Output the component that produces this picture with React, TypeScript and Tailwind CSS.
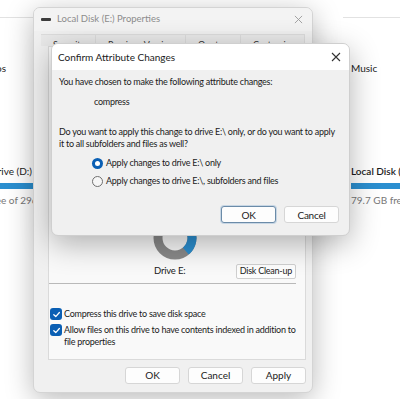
import React from 'react';

const font = { fontFamily: 'Lato, "Open Sans", sans-serif' };

function Check() {
  return (
    <span className="w-[12px] h-[12px] rounded-[3px] bg-[#0a5fb4] flex items-center justify-center shrink-0">
      <svg width="9" height="9" viewBox="0 0 10 10">
        <path d="M2 5.2 L4.2 7.3 L8.2 2.8" stroke="white" strokeWidth="1.4" fill="none" strokeLinecap="round" strokeLinejoin="round" />
      </svg>
    </span>
  );
}

function Radio({ on }: { on?: boolean }) {
  return on ? (
    <span className="w-[11px] h-[11px] rounded-full bg-[#0a5fb4] flex items-center justify-center shrink-0">
      <span className="w-[5px] h-[5px] rounded-full bg-white" />
    </span>
  ) : (
    <span className="w-[11px] h-[11px] rounded-full border border-[#6f6f6f] bg-[#f6f6f6] shrink-0" />
  );
}

function Btn({ label, focus }: { label: string; focus?: boolean }) {
  return (
    <div
      className={`w-[55px] h-[17px] rounded-[3px] bg-[#fdfdfd] flex items-center justify-center text-[10px] text-[#1b1b1b] ${
        focus ? 'border border-[#6b8ba8] shadow-[0_0_0_1px_#c7d6e4]' : 'border border-[#d6d6d6]'
      }`}
    >
      {label}
    </div>
  );
}

function Donut() {
  const r = 17;
  const c = 2 * Math.PI * r;
  return (
    <svg width="46" height="46" viewBox="0 0 46 46">
      <circle cx="23" cy="23" r={r} fill="none" stroke="#8a8a8a" strokeWidth="9" />
      <circle
        cx="23"
        cy="23"
        r={r}
        fill="none"
        stroke="#2b8fd0"
        strokeWidth="9"
        strokeDasharray={`${c * 0.36} ${c}`}
        transform="rotate(-80 23 23)"
      />
    </svg>
  );
}

export default function App() {
  return (
    <div className="relative w-[400px] h-[399px] overflow-hidden bg-white text-[#1b1b1b]" style={font}>
      {/* explorer behind */}
      <div className="absolute inset-0 flex">
        <div className="w-[40px] flex flex-col items-end">
          <div className="h-[18px] w-full border-b border-[#e2e2e2]" />
          <div className="mt-[44px] mr-[34px] text-[10px] leading-[12px] whitespace-nowrap">Videos</div>
          <div className="mt-[90px] mr-[8px] text-[10px] leading-[14px] whitespace-nowrap">Drive (D:)</div>
          <div className="mt-[5px] w-full h-[6px] bg-[#2b8fd0]" />
          <div className="mt-[5px] mr-[-14px] text-[10px] leading-[12px] text-[#777] whitespace-nowrap">free of 296 GB</div>
        </div>
        <div className="flex-1" />
        <div className="w-[57px] flex flex-col">
          <div className="h-[18px] border-b border-[#e2e2e2]" />
          <div className="mt-[44px] ml-[8px] text-[10px] leading-[12px]">Music</div>
          <div className="mt-[90px] ml-[8px] text-[10px] font-semibold leading-[14px] whitespace-nowrap">Local Disk (F:)</div>
          <div className="mt-[5px] ml-[8px] h-[6px] bg-[#2b8fd0]" />
          <div className="mt-[5px] ml-[8px] text-[10px] leading-[12px] text-[#777] whitespace-nowrap">79.7 GB free</div>
        </div>
      </div>

      {/* properties window */}
      <div className="absolute left-[33px] top-[7px] w-[280px] h-[386px] rounded-[7px] border border-[#d4d4d4] bg-[#f0f0f0] shadow-[0_6px_28px_rgba(0,0,0,0.28)] flex flex-col overflow-hidden">
        <div className="h-[23px] shrink-0 bg-[#f3f3f3] flex items-center px-[7px]">
          <span className="w-[10px] h-[3px] bg-[#3c3c3c] rounded-[1px]" />
          <span className="ml-[6px] text-[9.5px] text-[#8c8c8c]">Local Disk (E:) Properties</span>
          <span className="ml-auto mr-[2px] text-[#9a9a9a]">
            <svg width="9" height="9" viewBox="0 0 10 10">
              <path d="M1 1 L9 9 M9 1 L1 9" stroke="currentColor" strokeWidth="1" />
            </svg>
          </span>
        </div>
        <div className="h-[15px] shrink-0 flex items-end px-[7px]">
          <div className="flex w-full h-[12px] overflow-hidden text-[9px] leading-[12px] text-[#333] border-t border-[#dcdcdc]">
            <div className="w-[55px] pl-[12px] pt-[4px] border-r border-[#dcdcdc] bg-[#e9e9e9]">Security</div>
            <div className="w-[90px] pl-[12px] pt-[4px] border-r border-[#dcdcdc] bg-[#e9e9e9] whitespace-nowrap">Previous Versions</div>
            <div className="w-[55px] pl-[12px] pt-[4px] border-r border-[#dcdcdc] bg-[#e9e9e9]">Quota</div>
            <div className="flex-1 pl-[12px] pt-[4px] border-r border-[#dcdcdc] bg-[#e9e9e9]">Customize</div>
          </div>
        </div>
        <div className="ml-[14px] mr-[6px] h-[314px] border border-[#dadada] bg-[#f9f9f9] flex flex-col">
          <div className="h-[168px]" />
          <div className="flex items-end h-[46px] pl-[103px] pr-[9px]">
            <Donut />
          </div>
          <div className="flex items-center h-[16px] mt-[2px] pr-[9px]">
            <span className="ml-[105px] text-[9.5px] tracking-[-0.2px]">Drive E:</span>
            <span className="ml-auto h-[15px] px-[3px] rounded-[2px] border border-[#cfcfcf] bg-[#fdfdfd] text-[9px] tracking-[-0.25px] flex items-center">Disk Clean-up</span>
          </div>
          <div className="mt-[4px] mr-[9px] border-t border-[#b9b9b9]" />
          <div className="mt-[24px] flex flex-col gap-[4px] pl-[1px] text-[9px] tracking-[-0.25px] leading-[12px] whitespace-nowrap">
            <div className="flex items-center gap-[2px]">
              <Check />
              <span>Compress this drive to save disk space</span>
            </div>
            <div className="flex items-start gap-[2px]">
              <Check />
              <span>
                Allow files on this drive to have contents indexed in addition to
                <br />
                file properties
              </span>
            </div>
          </div>
        </div>
        <div className="flex justify-end gap-[8px] mr-[6px] mt-[7px]">
          <Btn label="OK" />
          <Btn label="Cancel" />
          <Btn label="Apply" />
        </div>
      </div>

      {/* confirm dialog */}
      <div className="absolute left-[51px] top-[43px] w-[299px] h-[193px] rounded-[7px] border border-[#cfcfcf] bg-[#f0f0f0] shadow-[0_8px_30px_rgba(0,0,0,0.3)] flex flex-col overflow-hidden">
        <div className="h-[26px] shrink-0 bg-white flex items-center pl-[6px] pr-[8px]">
          <span className="text-[10px] text-[#1b1b1b]">Confirm Attribute Changes</span>
          <span className="ml-auto text-[#333]">
            <svg width="10" height="10" viewBox="0 0 10 10">
              <path d="M1 1 L9 9 M9 1 L1 9" stroke="currentColor" strokeWidth="1.1" />
            </svg>
          </span>
        </div>
        <div className="flex flex-col px-[7px] text-[9px] tracking-[-0.25px] leading-[12px] whitespace-nowrap">
          <div className="mt-[6px]">You have chosen to make the following attribute changes:</div>
          <div className="mt-[8px] ml-[35px]">compress</div>
          <div className="mt-[18px]">
            Do you want to apply this change to drive E:\ only, or do you want to apply
            <br />
            it to all subfolders and files as well?
          </div>
          <div className="mt-[7px] ml-[33px] flex flex-col gap-[6px]">
            <div className="flex items-center gap-[3px]">
              <Radio on />
              <span>Apply changes to drive E:\ only</span>
            </div>
            <div className="flex items-center gap-[3px]">
              <Radio />
              <span>Apply changes to drive E:\, subfolders and files</span>
            </div>
          </div>
          <div className="mt-[19px] flex justify-end gap-[8px] pr-[3px]">
            <Btn label="OK" focus />
            <Btn label="Cancel" />
          </div>
        </div>
      </div>
    </div>
  );
}
